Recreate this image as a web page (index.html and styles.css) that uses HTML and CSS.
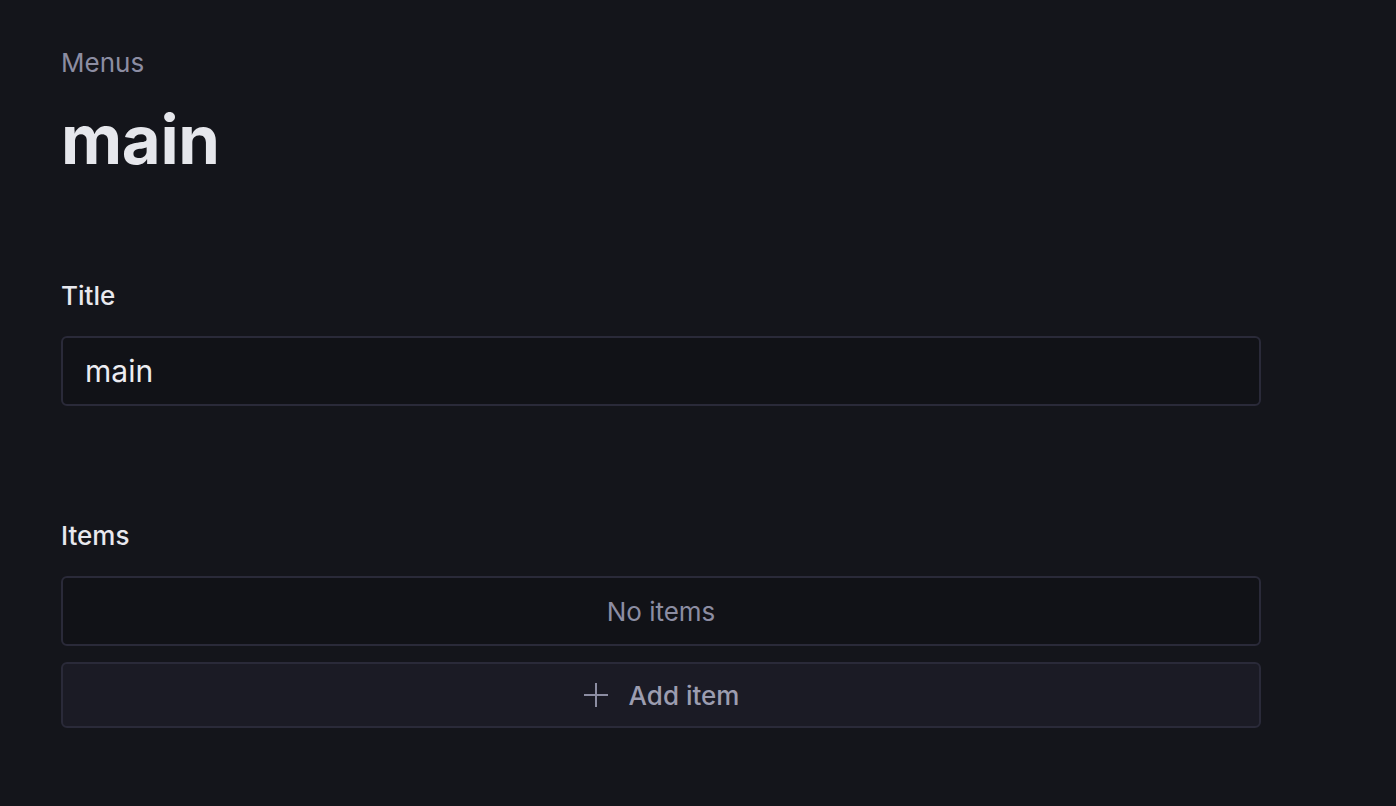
FILE: index.html
```html
<!DOCTYPE html>
<html>
<head>
<meta charset="utf-8">
<link rel="stylesheet" href="styles.css">
</head>
<body>
<main class="page">
  <header class="head">
    <div class="crumb">Menus</div>
    <h1 class="title">main</h1>
  </header>
  <section class="field">
    <label class="label">Title</label>
    <div class="input">main</div>
  </section>
  <section class="field items">
    <div class="label">Items</div>
    <div class="empty">No items</div>
    <button class="add">
      <svg class="plus" width="26" height="26" viewBox="0 0 26 26"><path d="M13 1v24M1 13h24" stroke="currentColor" stroke-width="2" fill="none"/></svg>
      <span>Add item</span>
    </button>
  </section>
</main>
</body>
</html>
```
FILE: styles.css
```css
html, body { margin: 0; padding: 0; }
body {
  background: #14151b;
  font-family: Inter, "Noto Sans", sans-serif;
  color: #e6e6ec;
  width: 1396px;
  height: 806px;
  overflow: hidden;
}
.page {
  padding: 47px 0 0 61px;
  width: 1200px;
}
.crumb {
  font-size: 26px;
  line-height: 32px;
  color: #8c8da2;
}
.title {
  margin: 21px 0 0 0;
  font-size: 67px;
  line-height: 80px;
  font-weight: 700;
  color: #e6e7ec;
  letter-spacing: -0.3px;
}
.field { display: flex; flex-direction: column; }
.field:first-of-type { margin-top: 100px; }
.label {
  font-size: 26px;
  line-height: 32px;
  color: #e8e8ee;
  font-weight: 500;
}
.input {
  margin-top: 24px;
  border: 2px solid #2a2a39;
  border-radius: 6px;
  background: #111217;
  box-sizing: border-box;
  height: 70px;
  padding: 0 22px;
  display: flex;
  align-items: center;
  font-size: 30px;
  color: #ececf1;
}
.items { margin-top: 114px; }
.empty {
  margin-top: 24px;
  height: 70px;
  box-sizing: border-box;
  border: 2px solid #2a2a39;
  border-radius: 6px;
  background: #111217;
  display: flex;
  align-items: center;
  justify-content: center;
  font-size: 26px;
  color: #8c8da2;
}
.add {
  margin-top: 16px;
  height: 66px;
  box-sizing: border-box;
  border: 2px solid #2a2a39;
  border-radius: 6px;
  background: #1b1b25;
  display: flex;
  align-items: center;
  justify-content: center;
  gap: 20px;
  font-family: inherit;
  font-size: 26px;
  font-weight: 500;
  color: #9c9db0;
  padding: 0;
  width: 100%;
}
.plus { color: #8c8da2; }
```
